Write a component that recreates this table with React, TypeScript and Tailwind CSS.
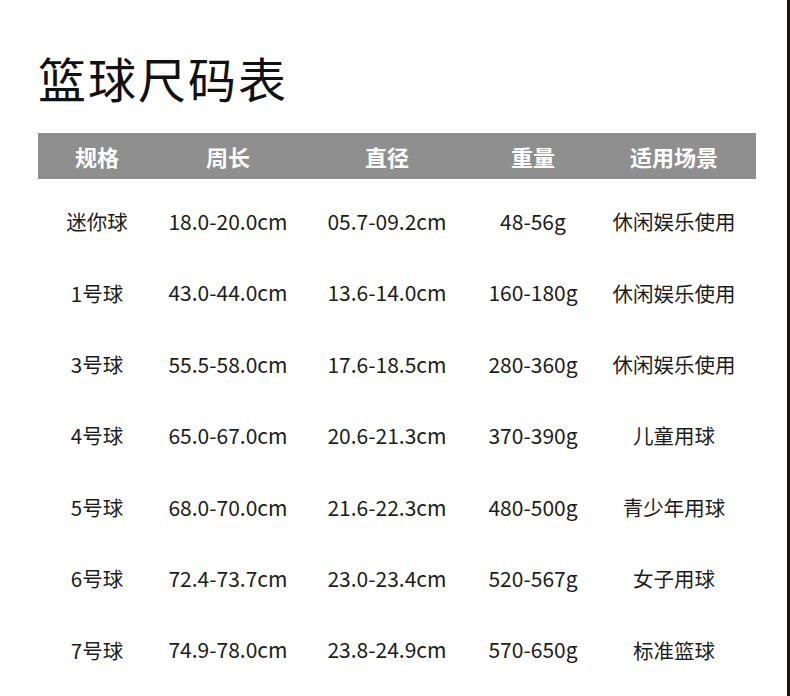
import React from "react";

interface SizeRow {
    size: string,
    circumference: string,
    diameter: string,
    weight: string,
    usage: string
}

const rows: SizeRow[] = [
    { size: "迷你球", circumference: "18.0-20.0cm", diameter: "05.7-09.2cm", weight: "48-56g", usage: "休闲娱乐使用" },
    { size: "1号球", circumference: "43.0-44.0cm", diameter: "13.6-14.0cm", weight: "160-180g", usage: "休闲娱乐使用" },
    { size: "3号球", circumference: "55.5-58.0cm", diameter: "17.6-18.5cm", weight: "280-360g", usage: "休闲娱乐使用" },
    { size: "4号球", circumference: "65.0-67.0cm", diameter: "20.6-21.3cm", weight: "370-390g", usage: "儿童用球" },
    { size: "5号球", circumference: "68.0-70.0cm", diameter: "21.6-22.3cm", weight: "480-500g", usage: "青少年用球" },
    { size: "6号球", circumference: "72.4-73.7cm", diameter: "23.0-23.4cm", weight: "520-567g", usage: "女子用球" },
    { size: "7号球", circumference: "74.9-78.0cm", diameter: "23.8-24.9cm", weight: "570-650g", usage: "标准篮球" },
];

const headers = ["规格", "周长", "直径", "重量", "适用场景"];

function App() {
    return (
        <div className="flex w-[790px] h-[696px] bg-white overflow-hidden font-['Noto_Sans_CJK_SC',sans-serif] text-[#1c1c1c]">
            <div className="flex-1 pl-[38px] pr-[31px]">
                <h1 className="mt-[52px] h-[50px] text-[48px] leading-[50px] font-normal text-[#111] tracking-[2px]">
                    篮球尺码表
                </h1>

                <div className="mt-[31px] grid grid-cols-[118px_144px_174px_118px_164px] h-[46px] items-center bg-[#8f8f8f] text-white text-[22px] font-bold leading-[42px]">
                    {headers.map((h, i) => (
                        <div key={i} className="text-center">{h}</div>
                    ))}
                </div>

                <div className="mt-[7px]">
                    {rows.map((row, index) => (
                        <div key={index} className="grid grid-cols-[118px_144px_174px_118px_164px] h-[71.4px] items-center text-[20.5px]">
                            <div className="text-center">{row.size}</div>
                            <div className="text-center text-[21px]">{row.circumference}</div>
                            <div className="text-center text-[21px]">{row.diameter}</div>
                            <div className="text-center text-[21px]">{row.weight}</div>
                            <div className="text-center">{row.usage}</div>
                        </div>
                    ))}
                </div>
            </div>
            <div className="w-[3px] h-full bg-[#1f140d]" />
        </div>
    );
}

export default App;
